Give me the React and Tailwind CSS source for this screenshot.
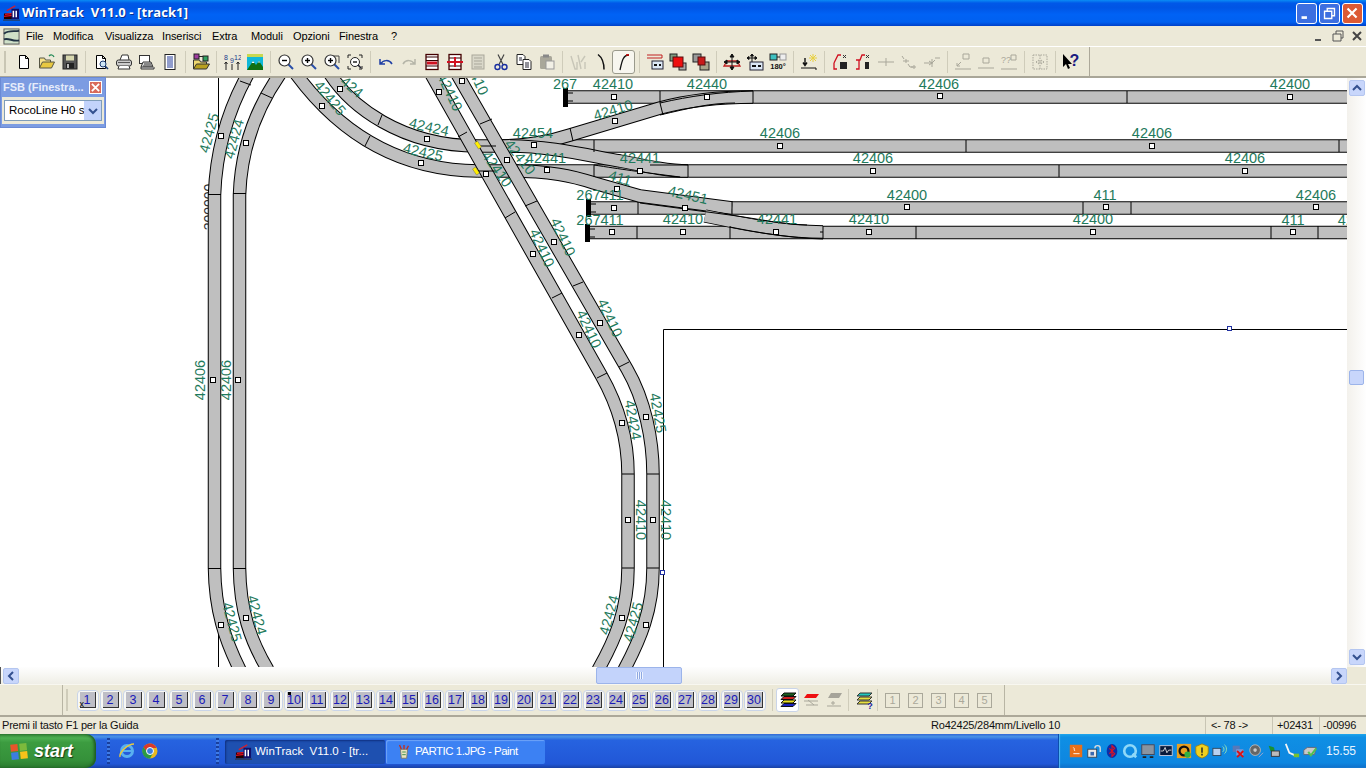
import React from 'react';

const Svg = ({ children, s = 18, className = '' }) => (
  <svg viewBox="0 0 18 18" width={s} height={s} className={className}>{children}</svg>
);

const Logo = ({ s = 18 }) => (
  <Svg s={s}>
    <path d="M1 9h9v6H1z" fill="#200" />
    <path d="M2 10l8-1M1 12l9-1" stroke="#e01020" strokeWidth="1.4" />
    <path d="M4 6l9-5" stroke="#d02030" strokeWidth="1.4" />
    <rect x="9" y="4" width="8" height="11" fill="#10106a" />
    <path d="M11 6v7M14 6v7" stroke="#fff" strokeWidth="1.6" />
    <path d="M0 16h18" stroke="#333" />
  </Svg>
);

const Page = ({ c = '#000', f = '#fff' }) => <path d="M4.5 2.5h6l3 3v10h-9zM10.5 2.5v3h3" fill={f} stroke={c} />;
const Mag = ({ k }) => (
  <>
    <path d="M11 11l5 5" stroke="#2a4fa8" strokeWidth="2" />
    <circle cx="7.5" cy="7.5" r="5.5" fill="#fff" stroke="#333" strokeWidth="1.2" />
    <path d="M5 7.5h5" stroke="#000" strokeWidth="1.4" />
    {k && <path d="M7.5 5v5" stroke="#000" strokeWidth="1.4" />}
  </>
);
const Off = '#a9a79a';

const ic = {
  new: <Page />,
  open: (
    <>
      <path d="M1.5 15V5h5l1 2h5v2" fill="#f8e38a" stroke="#554" />
      <path d="M1.5 15l3-6h12l-3 6z" fill="#e8c840" stroke="#554" />
      <path d="M11 3c2-2 4-1 5 1" stroke="#285" fill="none" strokeWidth="1.3" />
    </>
  ),
  save: (
    <>
      <rect x="2" y="2" width="14" height="14" fill="#555" stroke="#222" />
      <rect x="5" y="2.5" width="8" height="5" fill="#d8d8b0" />
      <rect x="5" y="10" width="8" height="5.5" fill="#222" />
      <rect x="6" y="11" width="2" height="4" fill="#bbb" />
    </>
  ),
  prev: (
    <>
      <Page />
      <circle cx="11" cy="11" r="3" fill="#cfe6f5" stroke="#1a3a70" />
      <path d="M13 13l3 3" stroke="#1a3a70" strokeWidth="1.6" />
    </>
  ),
  print: (
    <>
      <path d="M5 7l2-5h6l1 5" fill="#fff" stroke="#333" />
      <rect x="1.5" y="7" width="15" height="6" rx="2" fill="#ccc" stroke="#333" />
      <path d="M4 13l-1 3h12l-1-3" fill="#fff" stroke="#333" />
      <path d="M3 9.5h12" stroke="#555" />
    </>
  ),
  setup: (
    <>
      <rect x="1.5" y="2.5" width="10" height="8" fill="#fff" stroke="#333" />
      <path d="M3 14l2-5h8l2 5zM3 14v2h13v-2" fill="#ddd" stroke="#333" />
      <path d="M6 11h7M5 13h9" stroke="#333" />
    </>
  ),
  list: (
    <>
      <rect x="4" y="1.5" width="10" height="15" fill="#fff" stroke="#222" />
      <path d="M6 4h6M6 6h6M6 8h6M6 10h6M6 12h6M6 14h6" stroke="#233a9a" />
    </>
  ),
  folder: (
    <>
      <rect x="2" y="1" width="5" height="5" fill="#a03ca0" stroke="#222" />
      <rect x="11" y="3" width="5" height="5" fill="#30a060" stroke="#222" />
      <path d="M7 3.5h4" stroke="#222" />
      <path d="M1.5 16V7h6l1 2h6v3" fill="#eed870" stroke="#333" />
      <path d="M1.5 16l3-5h13l-3 5z" fill="#b8a020" stroke="#333" />
    </>
  ),
  nums: (
    <>
      <text x="3" y="7" fontSize="7" fill="#1a3a8a" textAnchor="middle">8</text>
      <text x="9" y="10" fontSize="7" fill="#1a3a8a" textAnchor="middle">9</text>
      <text x="15" y="7" fontSize="7" fill="#1a3a8a" textAnchor="middle">12</text>
      <path d="M3 17V9M1.5 11L3 9l1.5 2M9 17v-6M15 17V9M13.5 11L15 9l1.5 2" stroke="#222" fill="none" />
    </>
  ),
  land: (
    <>
      <rect x="1" y="1" width="16" height="16" fill="#10b8d8" />
      <path d="M1 1h16v3H1z" fill="#c8d850" />
      <path d="M1 17l6-9 3 4 3-4 4 6v3z" fill="#107010" />
      <path d="M5.7 10L7 8l1.5 2zM12 9.5l1-1.5 1 1.5z" fill="#fff" />
    </>
  ),
  zout: <Mag />,
  zin: <Mag k />,
  zfit: (
    <>
      <path d="M9 3h7v7" fill="none" stroke="#444" />
      <Mag k />
    </>
  ),
  zall: (
    <>
      <path d="M2 5V2h3M13 2h3v3M2 13v3h3M13 16h3v-3" stroke="#222" fill="none" />
      <circle cx="9" cy="9" r="4.5" fill="#fff" stroke="#222" />
      <path d="M7 9h4" stroke="#000" strokeWidth="1.3" />
      <path d="M12 12l3 3" stroke="#223" strokeWidth="1.6" />
    </>
  ),
  undo: <path d="M3 6v5h5M3.5 11C6 7 12 6 15 11" fill="none" stroke="#1f3fa5" strokeWidth="1.5" />,
  redo: <path d="M15 6v5h-5M14.5 11C12 7 6 6 3 11" fill="none" stroke="#b5b5a8" strokeWidth="1.5" />,
  pgred: (
    <>
      <rect x="3" y="1.5" width="12" height="15" fill="#fff" stroke="#400" strokeWidth="1.3" />
      <path d="M3 4h12M3 7.5h12M3 13h12" stroke="#300" strokeWidth="1.2" />
      <rect x="4" y="8.5" width="10" height="3" fill="#d01020" />
    </>
  ),
  pgx: (
    <>
      <rect x="3" y="1.5" width="12" height="15" fill="#fff" stroke="#400" strokeWidth="1.3" />
      <path d="M3 5h12M3 13h12" stroke="#300" strokeWidth="1.2" />
      <path d="M1 9h16M9 4v10" stroke="#d01020" strokeWidth="2" />
    </>
  ),
  pggr: (
    <>
      <rect x="3" y="2" width="12" height="14" fill="#dad8ca" stroke={Off} />
      <path d="M5 5h8M5 8h8M5 11h8M5 14h8" stroke={Off} />
    </>
  ),
  cut: (
    <>
      <path d="M6 1.5l5 10M12 1.5l-5 10" stroke="#444" strokeWidth="1.2" />
      <circle cx="5.5" cy="14" r="2.5" fill="none" stroke="#1a2fa0" strokeWidth="1.4" />
      <circle cx="12.5" cy="14" r="2.5" fill="none" stroke="#1a2fa0" strokeWidth="1.4" />
    </>
  ),
  copy: (
    <>
      <path d="M2 1.5h6l2 2v8H2z" fill="#fff" stroke="#222" />
      <path d="M8 6.5h6l2 2v8H8z" fill="#fff" stroke="#222" />
      <path d="M10 10h4M10 12h4M10 14h4M4 5h3M4 7h3" stroke="#223" />
    </>
  ),
  paste: (
    <>
      <rect x="2" y="3" width="12" height="13" rx="1.5" fill="#a9a79a" />
      <rect x="5" y="1.5" width="6" height="3" fill="#888" />
      <rect x="8" y="8" width="8" height="8" fill="#f2f0e6" stroke="#999" />
    </>
  ),
  fork: <path d="M2 3l4 13h2V9M16 3l-4 6M9 2l3 14M16 16V9" fill="none" stroke="#c8c6b8" strokeWidth="1.4" />,
  curve: <path d="M6 1.5c4 3 6 8 6 15" fill="none" stroke="#111" strokeWidth="1.5" />,
  scurve: (
    <>
      <path d="M5 17C7 8 8 2 14 2" fill="none" stroke="#111" strokeWidth="1.3" />
      <path d="M11 2h3" stroke="#c00" strokeWidth="1.5" />
    </>
  ),
  rect: (
    <>
      <path d="M1 2h15v3H1" fill="none" stroke="#c02020" strokeWidth="1" />
      <rect x="6" y="8" width="11" height="8" fill="#dce8f5" stroke="#223" />
      <path d="M8 12h3M13 12h2" stroke="#111" strokeWidth="2" />
    </>
  ),
  red1: (
    <>
      <rect x="1" y="1" width="7" height="7" fill="#7f9c80" stroke="#222" />
      <rect x="10" y="10" width="7" height="7" fill="#aaa" stroke="#222" />
      <rect x="4" y="4" width="10" height="10" fill="#ee0f0f" stroke="#511" />
    </>
  ),
  red2: (
    <>
      <rect x="1" y="1" width="8" height="8" fill="#999" stroke="#222" />
      <rect x="8" y="9" width="9" height="8" fill="#a8a48a" stroke="#222" />
      <rect x="6" y="4" width="7" height="8" fill="#c81a1a" stroke="#511" />
    </>
  ),
  move: (
    <>
      <path d="M1 13h16l-3-5H4z" fill="none" stroke="#c02020" strokeWidth="1.3" />
      <path d="M9 1v16M2 9h14M9 1l-2 3h4zM9 17l-2-3h4zM1 9l3-2v4zM17 9l-3-2v4z" stroke="#111" fill="#111" />
    </>
  ),
  bar: (
    <>
      <path d="M6 1v8M1 5h10M6 1L4.5 3h3zM1 5l2-1.5v3zM11 5L9 3.5v3z" stroke="#111" fill="#111" />
      <rect x="4" y="9" width="13" height="8" fill="#dce8f5" stroke="#223" />
      <path d="M6 13h4M12 13h3" stroke="#111" strokeWidth="2" />
    </>
  ),
  rot: (
    <>
      <rect x="1" y="1" width="7" height="6" fill="#3fc0c0" stroke="#222" />
      <rect x="11" y="1" width="6" height="6" fill="#eee" stroke="#999" />
      <path d="M8 4h3" stroke="#222" />
      <text x="9" y="16" fontSize="7.5" fontWeight="700" fill="#111" textAnchor="middle">180°</text>
    </>
  ),
  star: (
    <>
      <path d="M1 15h15v2" fill="none" stroke="#111" />
      <path d="M5 5v7M3 9.5l2 3 2-3" stroke="#111" fill="none" strokeWidth="1.4" />
      <path d="M13 1v8M9 5h8M10 2l6 6M16 2l-6 6" stroke="#e8d040" />
    </>
  ),
  tr1: (
    <>
      <path d="M3 10L7 2h3M3 10v6h3" fill="none" stroke="#d01020" strokeWidth="1.3" />
      <rect x="9" y="9" width="7" height="7" fill="#222" />
      <path d="M12 2l3 3M15 2l-3 3" stroke="#333" />
    </>
  ),
  tr2: (
    <>
      <path d="M2 7h4l2-5h3M2 16h3V7" fill="none" stroke="#d01020" strokeWidth="1.3" />
      <rect x="11" y="9" width="4" height="7" fill="#222" />
      <path d="M12 2l3 3M15 2l-3 3" stroke="#333" />
    </>
  ),
  d1: <path d="M1 9h16M9 5v8" stroke={Off} />,
  d2: <path d="M2 3l2 3M6 6v4M3 8h6M8 11l2 3h6M14 12v4M11 14h2" stroke={Off} fill="none" />,
  d3: <path d="M1 10h9M12 5h5M9 6v8M6 8l3 2-3 2M12 7l-3 3" stroke={Off} fill="none" />,
  d4: <path d="M1 16h16M9 1h6v5H9zM3 13l4-4M3 10v3h3" stroke={Off} fill="none" />,
  d5: <path d="M1 15h16M6 5h6v5H6z" stroke={Off} fill="none" />,
  d6: (
    <>
      <path d="M1 16h16M11 2h5v5h-5z" stroke={Off} fill="none" />
      <text x="6" y="10" fontSize="9" fill={Off} textAnchor="middle">??</text>
    </>
  ),
  d7: <path d="M2 2h14v14H2zM9 2v14M5 9l3-2v4zM13 9l-3-2v4z" stroke={Off} fill="none" strokeDasharray="1.5 1" />,
  help: (
    <>
      <path d="M1 1v13l3-3 2 5 2-1-2-4h4z" fill="#000" />
      <text x="12.5" y="13" fontSize="16" fontWeight="700" fill="#1a1a80" textAnchor="middle">?</text>
    </>
  ),
  lay1: (
    <>
      <path d="M5 2h12l-3 3H2z" fill="#1a6020" stroke="#111" />
      <path d="M5 5.5h12l-3 3H2z" fill="#d02020" stroke="#111" />
      <path d="M5 9h12l-3 3H2z" fill="#e8e020" stroke="#111" />
      <path d="M5 12.5h12l-3 3H2z" fill="#1a20c0" stroke="#111" />
    </>
  ),
  lay2: (
    <>
      <path d="M5 3h12l-3 4H2z" fill="#ee1010" />
      <path d="M2 10h14M4 14h12M6 9l6 5" stroke={Off} />
    </>
  ),
  lay3: (
    <>
      <path d="M6 2h11l-3 5H3z" fill="#a6a49a" />
      <path d="M2 15h14M8 10v4M6 12h4" stroke={Off} />
    </>
  ),
  lay4: (
    <>
      <path d="M5 2h12l-3 3H2z" fill="#20c8c0" stroke="#333" />
      <path d="M5 6h12l-3 3H2z" fill="#e8e040" stroke="#333" />
      <path d="M5 10h12l-3 3H2z" fill="#e8e040" stroke="#333" />
      <text x="15" y="17.5" fontSize="9" fontWeight="700" fill="#1a20a0" textAnchor="middle">?</text>
    </>
  ),
};

const topTools = [
  ['new', 'open', 'save'],
  ['prev', 'print', 'setup', 'list'],
  ['folder'],
  ['nums', 'land'],
  ['zout', 'zin', 'zfit', 'zall'],
  ['undo', 'redo', 'pgred', 'pgx', 'pggr', 'cut', 'copy', 'paste'],
  ['fork', 'curve', 'scurve'],
  ['rect', 'red1', 'red2'],
  ['move', 'bar', 'rot'],
  ['star'],
  ['tr1', 'tr2', 'd1', 'd2', 'd3'],
  ['d4', 'd5', 'd6'],
  ['d7'],
  ['help'],
];

const Sep = () => <div className="w-[8px] h-[22px] flex justify-center"><div className="w-px h-full bg-[#cfccba]" /></div>;

const TopToolbar = () => (
  <div className="h-[32px] bg-[#ece9d8] flex border-t border-t-white border-b-2 border-b-[#a9a698]">
    <div className="w-[1090px] flex items-center pl-[12px] border-r border-r-[#aca899] relative">
      <div className="absolute left-[4px] top-[4px] w-[2px] h-[22px] bg-[#c9c6b4]" />
      {topTools.map((group, i) => (
        <React.Fragment key={i}>
          {i > 0 && <Sep />}
          {group.map((name) => (
            <div key={name} className="w-[23px] h-[24px] flex items-center justify-center relative">
              {name === 'scurve' && <div className="absolute inset-y-0 left-0 w-[23px] rounded-[3px] border border-[#9a9a8c] bg-[#f7f6ef]" />}
              <Svg className="relative">{ic[name]}</Svg>
            </div>
          ))}
        </React.Fragment>
      ))}
    </div>
  </div>
);

const menus = [
  ['File', 27],
  ['Modifica', 52],
  ['Visualizza', 57],
  ['Inserisci', 50],
  ['Extra', 39],
  ['Moduli', 42],
  ['Opzioni', 46],
  ['Finestra', 52],
  ['?', 15],
];

const WinBtn = ({ bg, children }) => (
  <div className={`w-[21px] h-[21px] rounded-[3px] border border-white flex items-center justify-center ${bg}`}>
    <svg viewBox="0 0 21 21" width="19" height="19" fill="none" stroke="#fff">{children}</svg>
  </div>
);

const TitleBar = () => (
  <div className="h-[26px] flex items-center bg-[linear-gradient(180deg,#0a8cf5_0%,#0058e8_12%,#0055e5_30%,#0062f5_55%,#0060f0_85%,#0040c8_100%)]">
    <div className="ml-[3px] mr-[2px]"><Logo s={17} /></div>
    <span className="text-white font-bold text-[13px] whitespace-pre font-['Open_Sans',sans-serif] [text-shadow:1px_1px_0_#0b2f90] tracking-[0.1px]">WinTrack  V11.0 - [track1]</span>
    <div className="ml-auto mr-[3px] flex gap-[2px]">
      <WinBtn bg="bg-[#3d6fe0]"><path d="M5 15h6" strokeWidth="3" /></WinBtn>
      <WinBtn bg="bg-[#3d6fe0]"><path d="M5 8h8v8H5zM8 8V5h8v8h-3" strokeWidth="1.5" /></WinBtn>
      <WinBtn bg="bg-[#dc5a35]"><path d="M5 5l10 10M15 5L5 15" strokeWidth="2.4" /></WinBtn>
    </div>
  </div>
);

const MenuBar = () => (
  <div className="h-[20px] bg-[#ece9d8] flex items-center text-[11px] tracking-[-0.1px] text-black">
    <div className="w-[21px] pl-[3px]">
      <Svg s={17}>
        <rect x="1" y="1" width="16" height="16" fill="#cfe0c8" stroke="#555" />
        <path d="M1 6c5-4 10-2 16-3M1 12c5-2 10 3 16 1" stroke="#234" strokeWidth="2" fill="none" />
      </Svg>
    </div>
    {menus.map(([m, w]) => (
      <span key={m} style={{ width: w }} className="pl-[5px]">{m}</span>
    ))}
    <div className="ml-auto flex items-center gap-[5px] pr-[2px]">
      <svg viewBox="0 0 14 14" width="14" height="14" stroke="#555" fill="none"><path d="M3 11h6" strokeWidth="2" /></svg>
      <svg viewBox="0 0 14 14" width="14" height="14" stroke="#555" fill="none"><path d="M2 5h8v7H2zM5 5V2h7v7h-2" /></svg>
      <svg viewBox="0 0 14 14" width="14" height="14" stroke="#444" fill="none"><path d="M3 3l8 8M11 3l-8 8" strokeWidth="2" /></svg>
    </div>
  </div>
);

/* track plan, drawn in page coordinates */
const rows = [
  'M565 97H1347',
  'M478 146H1347',
  'M478 171H1347',
  'M588 208H1347',
  'M587 232.5H1347',
];
const branches = [
  'M500 146C525 146 545 143 570 135L660 108C690 100 720 97 753 97',
  'M510 146C550 146 590 156 620 161C650 167 670 171 688 171',
  'M510 171C550 171 572 176 594 183L640 196L732 208',
  'M705 216L730 221C760 227 790 232 823 232',
];
const curves = [
  'M248 74C228 110 216 150 214.5 195V568C215 610 225 640 240 670',
  'M280 74C255 110 241 150 239.5 195V568C240 610 250 640 268 670',
  'M296 74C330 120 385 170 478 171',
  'M330 74C350 105 400 146 478 146',
  'M431 74L601 375C618 405 628 440 628 474V568C628 610 615 640 598 670',
  'M457 74L627 369C645 400 653 440 653 474V568C653 610 640 640 624 670',
];
const joints = [
  [660, 91, 660, 103], [753, 91, 753, 103], [1127, 91, 1127, 103],
  [594, 140, 594, 152], [966, 140, 966, 152], [1339, 140, 1339, 152],
  [594, 165, 594, 177], [688, 165, 688, 177], [1059, 165, 1059, 177],
  [638, 202, 638, 214], [732, 202, 732, 214], [1083, 202, 1083, 214], [1131, 202, 1131, 214],
  [637, 226, 637, 239], [730, 226, 730, 239], [823, 226, 823, 239], [916, 226, 916, 239], [1271, 226, 1271, 239], [1318, 226, 1318, 239],
  [240, 81, 251, 85], [261, 93, 272, 98], [208, 194.5, 221, 194.5], [233, 193.5, 246, 193.5],
  [208, 568.5, 221, 568.5], [233, 568.5, 246, 568.5],
  [370, 136, 365, 146], [382, 115, 378, 125], [467, 132, 458, 137], [492, 119, 480, 124],
  [515, 212, 505, 218], [537, 201, 525, 206], [562, 293, 552, 298], [583, 282, 573, 286],
  [607, 373, 597, 378], [629, 362, 619, 367], [622, 474, 634, 474], [647, 474, 659, 474],
  [622, 568, 634, 568], [647, 568, 659, 568], [660, 103, 663, 115], [570, 128, 573, 141],
];
const nodes = [
  [614, 97], [707, 97], [940, 96], [1290, 97], [615, 121], [780, 146], [1152, 146], [534, 145], [547, 170],
  [640, 171], [873, 171], [1245, 171], [507, 160], [486, 174], [427, 139], [421, 163], [322, 106], [340, 89],
  [439, 92], [462, 81], [221, 136], [246, 143], [238, 380], [213, 380], [554, 242], [533, 254], [600, 323],
  [579, 335], [622, 423], [646, 417], [628, 520], [653, 520], [622, 618], [646, 625], [221, 625], [246, 618],
  [614, 208], [612, 232], [683, 232], [776, 232], [869, 232], [1093, 232], [1293, 232], [1316, 207], [907, 207],
  [1106, 207], [617, 189], [685, 208],
];
const labels = [
  ['267', 565, 84], ['42410', 613, 84], ['42440', 707, 84], ['42406', 939, 84], ['42400', 1290, 84],
  ['42410', 613, 110, -17], ['42454', 533, 133], ['42406', 780, 133], ['42406', 1152, 133],
  ['42441', 546, 158], ['42441', 640, 158], ['42406', 873, 158], ['42406', 1245, 158],
  ['411', 620, 178, 17], ['42451', 688, 195, 13], ['267411', 600, 195], ['42400', 907, 195], ['411', 1105, 195], ['42406', 1316, 195],
  ['267411', 600, 220], ['42410', 683, 219], ['42441', 777, 219], ['42410', 869, 219], ['42400', 1093, 219], ['411', 1293, 220], ['42406', 1358, 220],
  ['42425', 209, 133, -75], ['42424', 234, 139, -75], ['42425', 330, 98, 50], ['424', 352, 87, 40],
  ['42424', 429, 127, 13], ['42425', 423, 152, 13], ['42410', 450, 92, 65], ['42410', 476, 76, 65],
  ['42410', 520, 157, 52], ['42410', 497, 169, 55],
  ['42410', 563, 237, 65], ['42410', 542, 248, 65], ['42410', 610, 318, 65], ['42410', 589, 329, 65],
  ['42425', 658, 413, 80], ['42424', 633, 420, 80], ['42410', 666, 520, 90], ['42410', 641, 520, 90],
  ['42424', 609, 615, -75], ['42425', 633, 622, -75], ['42406', 200, 380, -90], ['42406', 226, 380, -90],
  ['42425', 232, 622, 75], ['42424', 257, 615, 75],
];

const Track = ({ d }) => (
  <g fill="none">
    <path d={d} stroke="#000" strokeWidth="13.5" />
    <path d={d} stroke="#bfbfbf" strokeWidth="11.5" />
  </g>
);

const Plan = () => (
  <svg viewBox="0 78 1347 589" width="1347" height="589" className="block font-['Liberation_Sans',sans-serif]">
    <path d="M218.5 78V667M663.5 667V329.5H1347" stroke="#000" fill="none" />
    <text x="0" y="0" fontSize="14" fill="#333" textAnchor="middle" transform="translate(214 207) rotate(-90)">200000</text>
    {rows.map((d) => <Track key={d} d={d} />)}
    {branches.map((d) => <Track key={d} d={d} />)}
    {curves.map((d) => <Track key={d} d={d} />)}
    {joints.map(([a, b, c, d], i) => <line key={i} x1={a} y1={b} x2={c} y2={d} stroke="#000" />)}
    <path d="M478 146h18M478 171h18" stroke="#000" fill="none" />
    <path d="M660 103C690 96 720 92 753 91M660 115C690 108 710 103 735 103" stroke="#000" fill="none" />
    <path d="M594 165C620 169 640 172 680 177M650 165H688M820 232H823" stroke="#000" fill="none" />
    <path d="M640 203L730 215C760 219 785 225 807 225M730 227C760 233 790 238 823 239" stroke="#000" fill="none" />
    {/* end stops */}
    <rect x="563" y="88" width="5" height="19" fill="#000" />
    <rect x="586" y="199" width="5" height="18" fill="#000" />
    <rect x="585" y="224" width="5" height="18" fill="#000" />
    <path d="M568 93h5M568 101h5M591 204h5M591 212h5M590 229h5M590 237h5" stroke="#000" />
    <path d="M477.5 141l4 6-3 2-4-6zM475.5 167l4 6-3 2-4-6z" fill="#ffee00" stroke="#555" strokeWidth="0.4" />
    {nodes.map(([x, y]) => <rect key={`${x}-${y}`} x={x - 2.5} y={y - 2.5} width="5" height="5" fill="#fff" stroke="#000" />)}
    <rect x="660.5" y="570.5" width="4" height="4" fill="#fff" stroke="#2030a0" />
    <rect x="1227.5" y="326.5" width="4" height="4" fill="#fff" stroke="#2030a0" />
    {labels.map(([t, x, y, r = 0], i) => (
      <text key={i} x={x} y={y + 5} fontSize="14.5" fill="#1f7a5c" textAnchor="middle" transform={r ? `rotate(${r} ${x} ${y})` : undefined}>{t}</text>
    ))}
  </svg>
);

const ScrollBtn = ({ d }) => (
  <div className="w-[16px] h-[16px] rounded-[2px] border border-[#b4c6f0] bg-[#c8d6fb] flex items-center justify-center">
    <svg viewBox="0 0 10 10" width="10" height="10" fill="none" stroke="#33508f" strokeWidth="2"><path d={d} /></svg>
  </div>
);

const FsbPanel = () => (
  <div className="absolute left-0 top-[-1px] w-[106px] h-[51px] bg-[#7c9ce2] flex flex-col shadow-[inset_0_0_0_1px_#6a8ad5]">
    <div className="h-[20px] flex items-center pl-[3px] pr-[4px] justify-between">
      <span className="text-[11px] font-bold text-[#e6ecfb] whitespace-nowrap">FSB (Finestra...</span>
      <div className="w-[13px] h-[13px] bg-[#d96a5a] border border-white flex items-center justify-center">
        <svg viewBox="0 0 10 10" width="9" height="9" stroke="#fff" strokeWidth="2"><path d="M1 1l8 8M9 1L1 9" /></svg>
      </div>
    </div>
    <div className="mx-[2px] h-[27px] bg-[#ece9d8] flex items-center justify-center">
      <div className="w-[98px] h-[21px] bg-white border border-[#7f9db9] flex items-center pl-[4px] overflow-hidden relative">
        <span className="text-[11.5px] whitespace-nowrap">RocoLine H0 se</span>
        <div className="absolute right-0 top-0 bottom-0 w-[17px] bg-[#c3d3fb] flex items-center justify-center">
          <svg viewBox="0 0 10 10" width="10" height="10" fill="none" stroke="#33508f" strokeWidth="2"><path d="M1 3l4 4 4-4" /></svg>
        </div>
      </div>
    </div>
  </div>
);

const Canvas = () => (
  <div className="h-[589px] flex relative">
    <div className="w-[1347px] h-[589px] overflow-hidden bg-white">
      <Plan />
    </div>
    <div className="w-[19px] bg-[linear-gradient(90deg,#f3f1ec,#fefefe)] flex flex-col items-center py-[2px] relative">
      <ScrollBtn d="M1 7l4-4 4 4" />
      <div className="absolute top-[292px] left-[2px] w-[15px] h-[15px] rounded-[2px] border border-[#9cb4ea] bg-[#c8d6fb]" />
      <div className="mt-auto"><ScrollBtn d="M1 3l4 4 4-4" /></div>
    </div>
    <FsbPanel />
  </div>
);

const HScroll = () => (
  <div className="h-[17px] flex bg-[linear-gradient(180deg,#fefefe,#efeee6)] border-l border-l-[#555]">
    <div className="w-[1346px] flex items-center relative pl-[2px]">
      <ScrollBtn d="M7 1L3 5l4 4" />
      <div className="absolute left-[595px] top-0 w-[86px] h-[17px] rounded-[2px] border border-[#9cb4ea] bg-[#c3d3fb] flex items-center justify-center">
        <div className="w-[7px] h-[7px] bg-[repeating-linear-gradient(90deg,#eef3ff_0_1px,#8ea8e0_1px_2px)]" />
      </div>
      <div className="ml-auto"><ScrollBtn d="M3 1l4 4-4 4" /></div>
    </div>
    <div className="w-[19px] bg-[#ece9d8]" />
  </div>
);

const Level = ({ n }) => (
  <div className="w-[23px] h-[22px] flex items-center justify-center">
    <div className="w-[22px] h-[21px] rounded-[4px] border border-[#c9d4e8] bg-[#f8f8f4] flex items-center justify-center relative">
      <div className="w-[16px] h-[16px] bg-[#bebec6] border-r border-b border-r-[#333] border-b-[#333] text-[#1a1ab8] text-[12.5px] leading-[16px] text-center">{n}</div>
      {n === 1 && <span className="absolute left-[2px] bottom-[1px] text-[9px] leading-[9px]">x</span>}
      {n === 10 && <span className="absolute left-[3px] top-[1px] w-[3px] h-[3px] bg-black" />}
    </div>
  </div>
);

const BottomBar = () => (
  <div className="h-[31px] bg-[#ece9d8] flex items-center border-t border-t-[#f8f7f0]">
    <div className="w-[1005px] h-full flex items-center border-l-0 border-r border-r-[#b8b5a4] relative">
      <div className="absolute left-[62px] top-0 h-full w-px bg-[#b8b5a4]" />
      <div className="absolute left-[66px] top-[4px] h-[22px] w-[2px] bg-[#cfccba]" />
      <div className="ml-[76px] flex items-center">
        {Array.from({ length: 30 }, (_, i) => <Level key={i} n={i + 1} />)}
      </div>
      <div className="ml-[6px] h-[22px] w-px bg-[#cfccba]" />
      <div className="ml-[3px] w-[23px] h-[24px] rounded-[3px] border border-[#c9d4e8] bg-white flex items-center justify-center"><Svg>{ic.lay1}</Svg></div>
      <div className="w-[23px] flex justify-center"><Svg>{ic.lay2}</Svg></div>
      <div className="w-[23px] flex justify-center"><Svg>{ic.lay3}</Svg></div>
      <div className="ml-[3px] h-[22px] w-px bg-[#cfccba]" />
      <div className="ml-[3px] w-[23px] flex justify-center"><Svg>{ic.lay4}</Svg></div>
      <div className="ml-[2px] mr-[3px] h-[22px] w-px bg-[#cfccba]" />
      {[1, 2, 3, 4, 5].map((n) => (
        <div key={n} className="w-[23px] flex justify-center">
          <div className="w-[15px] h-[15px] border border-[#aaa89a] text-[#aaa89a] text-[11px] leading-[13px] text-center">{n}</div>
        </div>
      ))}
    </div>
  </div>
);

const StatusBar = () => (
  <div className="h-[19px] bg-[#ece9d8] border-t-2 border-t-[#aca899] flex items-center text-[11px] tracking-[-0.2px] text-[#111] relative">
    <span className="pl-[2px]">Premi il tasto F1 per la Guida</span>
    <span className="absolute left-[931px]">Ro42425/284mm/Livello 10</span>
    <div className="absolute left-[1205px] top-0 bottom-0 w-px bg-[#c8c5b4]" />
    <span className="absolute left-[1211px]">{'<- 78 ->'}</span>
    <div className="absolute left-[1272px] top-0 bottom-0 w-px bg-[#c8c5b4]" />
    <span className="absolute left-[1277px]">+02431</span>
    <div className="absolute left-[1319px] top-0 bottom-0 w-px bg-[#c8c5b4]" />
    <span className="absolute left-[1323px]">-00996</span>
  </div>
);

const Grip = () => (
  <div className="w-[3px] h-[26px] bg-[repeating-linear-gradient(180deg,#1a3f9c_0_2px,#3f7ce8_2px_4px)]" />
);

const TaskBtn = ({ active, w, icon, children }) => (
  <div
    style={{ width: w }}
    className={`h-[24px] rounded-[2px] flex items-center gap-[3px] pl-[10px] text-white text-[11.5px] whitespace-pre overflow-hidden ${active ? 'bg-[#1e50b0] shadow-[inset_1px_1px_2px_#0f2f80]' : 'bg-[#3c81f3] shadow-[inset_1px_1px_1px_#6ea4f8]'}`}
  >
    {icon}
    {children}
  </div>
);

const Tray = () => (
  <div className="ml-auto w-[308px] h-full bg-[linear-gradient(180deg,#1aa3ea_0%,#0f8fe4_10%,#0e86e0_85%,#0f6fc8_100%)] border-l border-l-[#0b4fae] flex items-center pl-[9px] shadow-[inset_1px_0_1px_#54b6f0]">
    <div className="flex items-center gap-[2px]">
      {[
        <><rect x="2" y="2" width="14" height="14" fill="#e8701a" /><path d="M6 12h7M6 5c2 1 0 3 2 4" stroke="#fff" fill="none" /></>,
        <><rect x="2" y="7" width="10" height="9" fill="#e8e8e8" stroke="#345" /><path d="M10 6a3 3 0 016 0v4" stroke="#ddd" fill="none" strokeWidth="1.5" /><rect x="5" y="10" width="4" height="4" fill="#3a6ab0" /></>,
        <><ellipse cx="9" cy="9" rx="6" ry="8" fill="#0b2fa8" /><path d="M6 6l6 6-3 3V3l3 3-6 6" stroke="#e01020" fill="none" strokeWidth="1.3" /></>,
        <><circle cx="9" cy="9" r="6.5" fill="none" stroke="#8fd8f8" strokeWidth="3" /><path d="M12 12l4 4" stroke="#8fd8f8" strokeWidth="3" /></>,
        <><rect x="2" y="2" width="14" height="11" fill="#8a94a0" stroke="#445" /><path d="M3 16h4M11 16h4" stroke="#222" strokeWidth="2" /></>,
        <><rect x="2" y="3" width="14" height="11" fill="#0a1a3a" stroke="#ccd" /><path d="M3 9h3l2-4 2 6 2-3h3" stroke="#ddd" fill="none" /></>,
        <><rect x="1" y="1" width="16" height="16" fill="#e8a020" /><circle cx="9" cy="9" r="5" fill="none" stroke="#111" strokeWidth="2.5" /><circle cx="13" cy="13" r="3.5" fill="#30b040" /></>,
        <><path d="M9 1l7 3v6c0 4-4 6-7 7-3-1-7-3-7-7V4z" fill="#f0d020" stroke="#a08010" /><path d="M9 5v6M9 12v2" stroke="#222" strokeWidth="1.6" /></>,
        <><rect x="1" y="6" width="9" height="8" fill="#b8d0f0" stroke="#345" /><path d="M12 4c2 1 2 5 0 6M14 2c3 2 3 8 0 10" stroke="#9fe8b0" fill="none" /></>,
        <><rect x="3" y="3" width="8" height="7" fill="#5878b8" /><rect x="7" y="7" width="8" height="7" fill="#7898d8" /><path d="M8 9l7 7M15 9l-7 7" stroke="#e01010" strokeWidth="2" /></>,
        <><circle cx="8" cy="8" r="6" fill="#666" stroke="#bbb" /><circle cx="8" cy="8" r="2" fill="#ccc" /><path d="M12 16l5-5" stroke="#aac" /></>,
        <><path d="M3 3l6 2 1 5-5-1z" fill="#1a9030" /><rect x="6" y="9" width="9" height="6" fill="#bbb" stroke="#333" /></>,
        <><path d="M2 1l4 10 9 4" stroke="#f5f5f5" fill="none" strokeWidth="2" /><rect x="11" y="12" width="6" height="4" fill="#78c030" /></>,
        <><path d="M2 8l4-3h10l-2 8H2z" fill="#c8c8c8" stroke="#667" /><path d="M7 10l3 4 6-8" stroke="#50c050" fill="none" strokeWidth="2.2" /></>,
      ].map((g, i) => <Svg key={i} s={16}>{g}</Svg>)}
    </div>
    <span className="ml-[8px] text-[12px] text-[#e6f3ff]">15.55</span>
  </div>
);

const Taskbar = () => (
  <div className="h-[34px] flex items-center bg-[linear-gradient(180deg,#3168d5_0%,#4993e6_8%,#2663e0_18%,#2157d7_88%,#1941a5_100%)]">
    <div className="w-[96px] h-full rounded-r-[10px] bg-[linear-gradient(180deg,#388e3c_0%,#4cae50_12%,#3c9c40_25%,#35913a_75%,#2a7a2e_100%)] flex items-center pl-[10px] gap-[6px] shadow-[inset_-2px_0_3px_#1e5a22]">
      <svg viewBox="0 0 20 20" width="18" height="18" className="-rotate-6">
        <rect x="1" y="2" width="8" height="8" fill="#e8552a" />
        <rect x="11" y="2" width="8" height="8" fill="#7cba3c" />
        <rect x="1" y="11" width="8" height="8" fill="#3d7de0" />
        <rect x="11" y="11" width="8" height="8" fill="#f7c31a" />
      </svg>
      <span className="text-white italic font-bold text-[18px] [text-shadow:1px_1px_1px_#143d14] font-['Liberation_Sans',sans-serif]">start</span>
    </div>
    <div className="ml-[11px]"><Grip /></div>
    <div className="ml-[6px] w-[22px] flex justify-center">
      <Svg>
        <circle cx="9" cy="9" r="5.5" fill="none" stroke="#58b0f0" strokeWidth="3" />
        <path d="M4 9h10" stroke="#58b0f0" strokeWidth="2" />
        <path d="M2 15C1 10 10 2 16 2" stroke="#e8c840" fill="none" strokeWidth="1.4" />
      </Svg>
    </div>
    <div className="ml-[1px] w-[22px] flex justify-center">
      <Svg>
        <circle cx="9" cy="9" r="7.5" fill="#e8b820" />
        <path d="M9 1.5A7.5 7.5 0 002.5 5L6 11l3-5h6.5A7.5 7.5 0 009 1.5z" fill="#d8392b" />
        <path d="M2.5 5A7.5 7.5 0 009 16.5l3-5.5-5 .5z" fill="#2a9a45" />
        <circle cx="9" cy="9" r="3.5" fill="#3c7fe0" stroke="#fff" />
      </Svg>
    </div>
    <div className="ml-[55px]"><Grip /></div>
    <div className="ml-[6px] flex gap-[1px] mt-[2px]">
      <TaskBtn active w={160} icon={<Logo s={17} />}><span>WinTrack  V11.0 - [tr...</span></TaskBtn>
      <TaskBtn w={159} icon={
        <Svg s={16}>
          <path d="M5 6h8l-1 10H6z" fill="#e8e4c0" stroke="#776" />
          <path d="M6 6L4 1M9 6V1M12 6l2-4" stroke="#c03020" strokeWidth="1.5" />
          <path d="M7 9h4M7 12h4" stroke="#2f8a40" />
        </Svg>
      }><span className="tracking-[-0.5px]">PARTIC 1.JPG - Paint</span></TaskBtn>
    </div>
    <Tray />
  </div>
);

export default function App() {
  return (
    <div className="w-[1366px] h-[768px] overflow-hidden flex flex-col bg-[#ece9d8] font-['Liberation_Sans',sans-serif]">
      <TitleBar />
      <MenuBar />
      <TopToolbar />
      <Canvas />
      <HScroll />
      <BottomBar />
      <StatusBar />
      <Taskbar />
    </div>
  );
}
